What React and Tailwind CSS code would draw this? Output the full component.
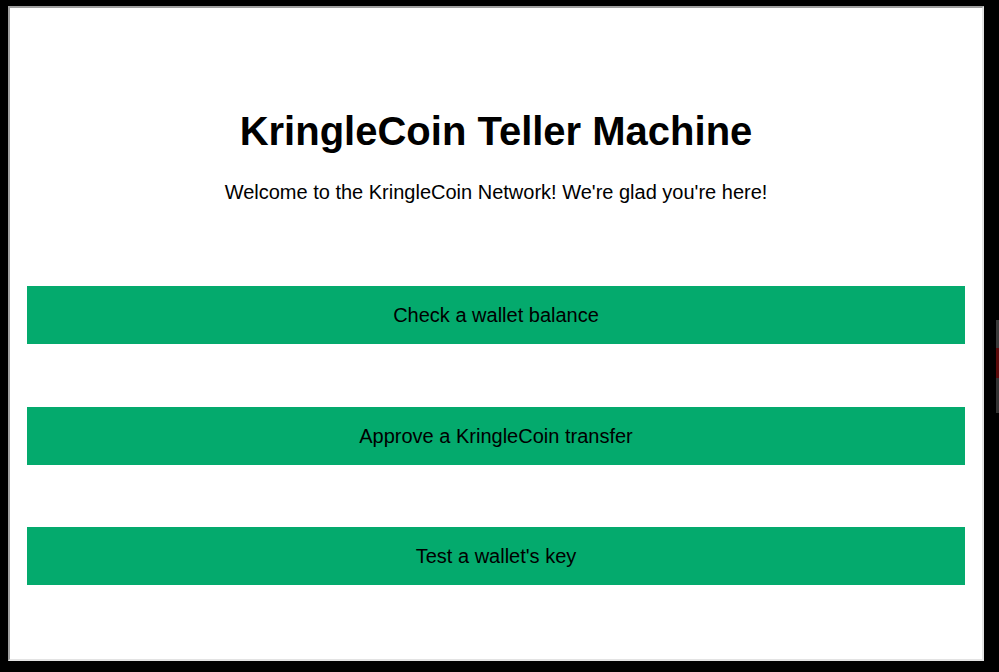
const actions = [
  'Check a wallet balance',
  'Approve a KringleCoin transfer',
  "Test a wallet's key",
];

const App = () => {
  return (
    <div className="w-[999px] h-[672px] bg-black flex overflow-hidden" style={{ fontFamily: '"Liberation Sans", Arial, sans-serif' }}>
      <div className="pt-[6px] pl-[8px]">
        <div className="w-[976px] h-[655px] border-2 border-t-[#a0a0a0] border-l-[#a0a0a0] border-r-[#e3e3e3] border-b-[#e3e3e3] bg-white flex flex-col items-center">
          <h1 className="mt-[100px] text-[40px] leading-[46px] font-bold text-black">KringleCoin Teller Machine</h1>
          <p className="mt-[27px] text-[20px] leading-[23px] text-black">
            Welcome to the KringleCoin Network! We're glad you're here!
          </p>
          <div className="mt-[82px] w-full px-[17px] flex flex-col gap-[62.5px]">
            {actions.map((label) => (
              <div key={label} className="h-[58px] bg-[#04aa6d] flex items-center justify-center text-[20px] text-black">
                {label}
              </div>
            ))}
          </div>
        </div>
      </div>
      <div className="flex-1 flex justify-end">
        <div className="w-[3px] flex flex-col">
          <div className="h-[320px]" />
          <div className="h-[28px] bg-[#3a3a3a]" />
          <div className="h-[30px] bg-[#5a0a0a]" />
          <div className="h-[35px] bg-[#333333]" />
        </div>
      </div>
    </div>
  );
};

export default App;
